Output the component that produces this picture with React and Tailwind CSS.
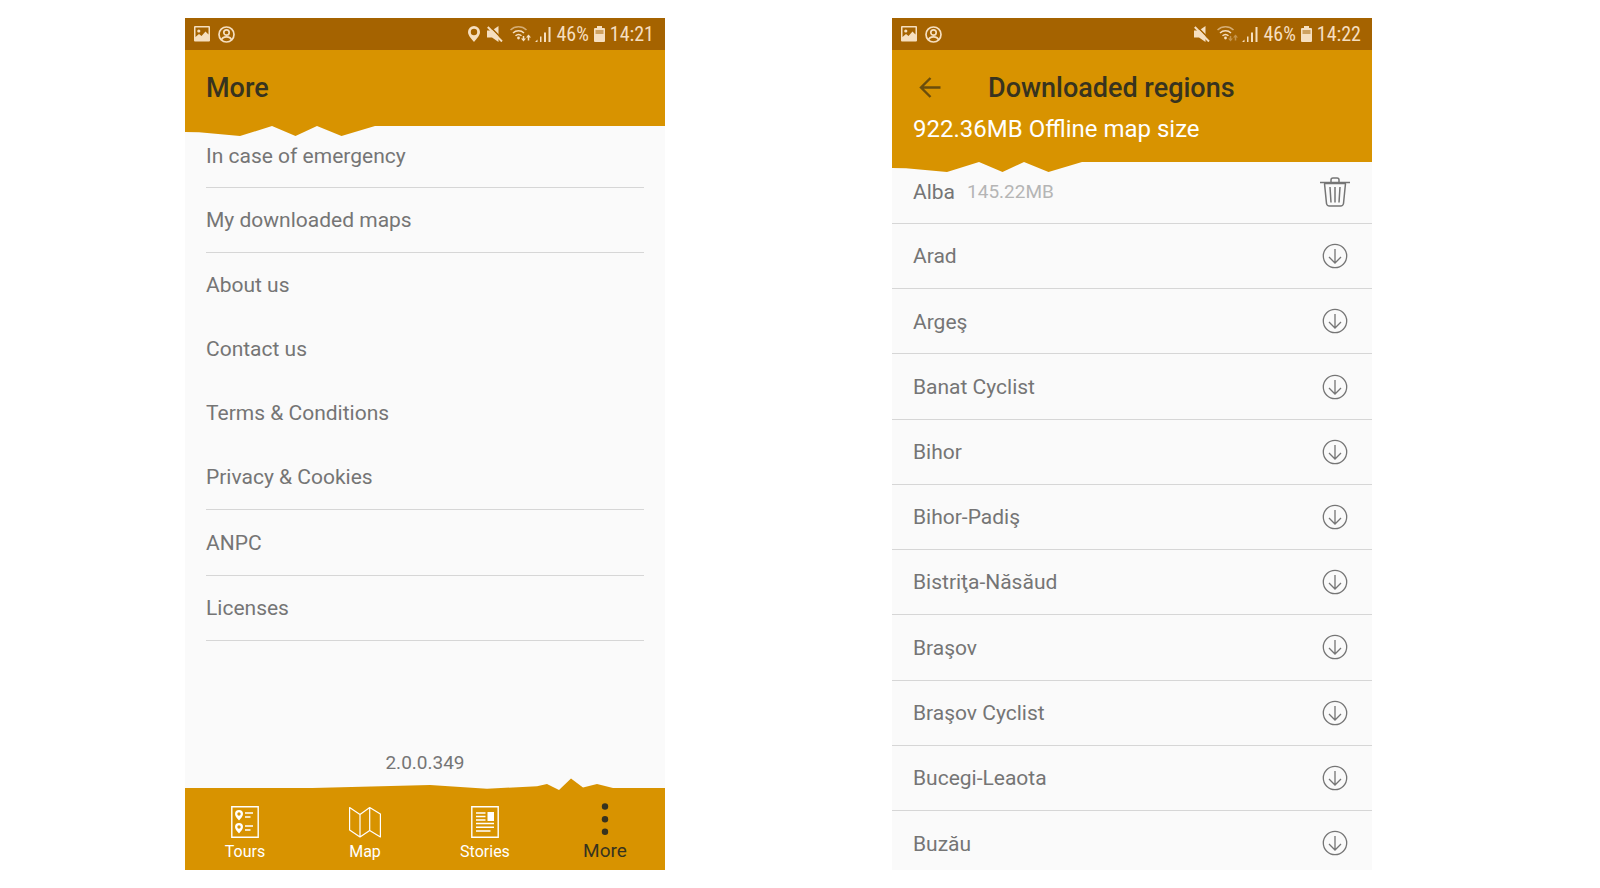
import React from 'react';

const menuItems = [
  { label: 'In case of emergency', size: 'h-[62px]', divider: true },
  { label: 'My downloaded maps', size: 'h-[65px] pt-0.5', divider: true },
  { label: 'About us', size: 'h-[64px] pt-0.5' },
  { label: 'Contact us', size: 'h-[64px] pt-0.5' },
  { label: 'Terms & Conditions', size: 'h-[64px] pt-0.5' },
  { label: 'Privacy & Cookies', size: 'h-[65px] pt-0.5', divider: true },
  { label: 'ANPC', size: 'h-[66px] pt-0.5', divider: true },
  { label: 'Licenses', size: 'h-[65px] pt-0.5', divider: true },
];

const regions = [
  'Arad',
  'Argeş',
  'Banat Cyclist',
  'Bihor',
  'Bihor-Padiş',
  'Bistriţa-Năsăud',
  'Braşov',
  'Braşov Cyclist',
  'Bucegi-Leaota',
];

function StatusBar({ time, location, dimWifi }) {
  return (
    <div className="h-8 shrink-0 bg-[#a56300] text-[#f6dfc0] flex items-center justify-between pl-[9px] pr-[11px]">
      <div className="flex items-center gap-2">
        {/* Picture */}
        <svg className="w-4 h-4" viewBox="0 0 16 16" fill="currentColor">
          <path fillRule="evenodd" d="M1 0h14a1 1 0 0 1 1 1v13.500a1 1 0 0 1-1 1H1a1 1 0 0 1-1-1V1a1 1 0 0 1 1-1zM1.500 1.500v9.500l3.500-3 2.500 2 4-4.500 3 3V1.500z" />
          <circle cx="4.800" cy="5" r="1.600" />
        </svg>
        {/* Contact */}
        <svg className="w-[17px] h-[17px]" viewBox="0 0 17 17" fill="none" stroke="currentColor" strokeWidth="1.700">
          <circle cx="8.500" cy="8.500" r="7.500" />
          <circle cx="8.500" cy="6.500" r="2.700" />
          <path d="M3.500 14c.5-2.500 2.500-3.200 5-3.200s4.500.7 5 3.200" />
        </svg>
      </div>

      <div className="flex items-center">
        {location && (
          <svg className="w-3 h-4 mr-[7px]" viewBox="0 0 12 16" fill="currentColor">
            <path fillRule="evenodd" d="M6 0a6 6 0 0 1 6 6c0 3.800-4.200 7.500-6 10C4.200 13.500 0 9.800 0 6a6 6 0 0 1 6-6zm0 2.800a3.200 3.200 0 1 0 0 6.400 3.200 3.200 0 0 0 0-6.400z" />
          </svg>
        )}
        {/* Muted */}
        <svg className="w-4 h-4 mr-[7px]" viewBox="0 0 16 16">
          <path d="M0 4.500h5L11.500 0v16L5 11.500H0z" fill="currentColor" />
          <path d="M2-.5l15 15.500" stroke="#a56300" strokeWidth="1.600" />
          <path d="M.8 1L15 15.500" stroke="currentColor" strokeWidth="2" />
        </svg>
        {/* Wi-Fi */}
        <svg className="w-[21px] h-4 mr-1" viewBox="0 0 21 16" fill="none" stroke="currentColor" strokeWidth="1.500">
          <path d="M.5 4a11.500 11.500 0 0 1 16 0" opacity="0.6" />
          <path d="M3 7a8 8 0 0 1 11 0M5.500 9.800a4.500 4.500 0 0 1 6 0" />
          <circle cx="8.500" cy="12" r="1.400" fill="currentColor" stroke="none" />
          <g opacity={dimWifi ? 0.4 : 1}>
            <path d="M13.500 10v4M18.500 14.500v-5" />
            <path d="M11 12.500h5l-2.500 3zM16 11.500h5l-2.500-3z" fill="currentColor" stroke="none" />
          </g>
        </svg>
        {/* Signal */}
        <svg className="w-4 h-4 mr-[5px]" viewBox="0 0 16 16" fill="currentColor">
          <path d="M0 16l2.500-2.500V16zM5 10.500h1.500V16H5zM9 6.500h2V16H9zM13.500 1h2v15h-2z" />
        </svg>
        <span className="font-['Roboto_Condensed',Roboto,sans-serif] text-[20px] leading-8">46%</span>
        {/* Battery */}
        <svg className="w-[11px] h-4 mx-[5px]" viewBox="0 0 11 16" fill="currentColor">
          <path d="M3 0h5v2h2a1 1 0 0 1 1 1v12a1 1 0 0 1-1 1H1a1 1 0 0 1-1-1V3a1 1 0 0 1 1-1h2z" />
          <path d="M1.500 4h8v4h-8z" fill="#a56300" opacity="0.5" />
        </svg>
        <span className="font-['Roboto_Condensed',Roboto,sans-serif] text-[20px] leading-8">{time}</span>
      </div>
    </div>
  );
}

function TornHeaderEdge() {
  return (
    <svg className="absolute left-0 top-full w-full h-[10px]" viewBox="0 0 480 10" preserveAspectRatio="none" fill="#d89300">
      <path d="M0 0V6L14 6.300 55 10 87 0l23.500 10L132 0l24.500 10L190 0z" />
    </svg>
  );
}

function DownloadIcon() {
  return (
    <svg className="w-8 h-8" viewBox="0 0 32 32" fill="none" stroke="currentColor" strokeWidth="1.300">
      <circle cx="16" cy="16" r="11.700" />
      <path d="M16 9v14M10 17l6 6 6-6" />
    </svg>
  );
}

function TrashIcon() {
  return (
    <svg className="w-8 h-8" viewBox="0 0 32 32" fill="none" stroke="currentColor" strokeWidth="1.500">
      <path d="M1 5.500h30M12 5V3a2 2 0 0 1 2-2h4a2 2 0 0 1 2 2v2" />
      <path d="M5 6.500h22M5.500 6.500L7.500 26.500a3 3 0 0 0 3 2.500h11a3 3 0 0 0 3-2.500l2-20" />
      <path d="M11 10l1 15.500M16 10v15.500M21 10l-1 15.500" />
    </svg>
  );
}

function ToursIcon() {
  return (
    <svg className="w-8 h-8" viewBox="0 0 32 32" fill="none" stroke="currentColor">
      <path d="M2.800.8h26.400v30.400H2.800z" strokeWidth="1.400" />
      <path fillRule="evenodd" stroke="none" fill="currentColor" d="M10 4a4 4 0 0 1 4 4c0 2.500-2.500 4.500-4 6.500C8.500 12.500 6 10.500 6 8a4 4 0 0 1 4-4zm0 2.300a1.700 1.700 0 1 0 0 3.400 1.700 1.700 0 0 0 0-3.400zM10 17a4 4 0 0 1 4 4c0 2.500-2.500 4.500-4 6.500C8.500 25.500 6 23.500 6 21a4 4 0 0 1 4-4zm0 2.300a1.700 1.700 0 1 0 0 3.400 1.700 1.700 0 0 0 0-3.400z" />
      <path d="M16 7h8M16 11h5.500M16 20h8M16 24h5.500" strokeWidth="1.300" />
    </svg>
  );
}

function MapIcon() {
  return (
    <svg className="w-8 h-8" viewBox="0 0 32 32" fill="none" stroke="currentColor" strokeWidth="1.200" strokeLinejoin="round">
      <path d="M.6 1.500L11 8.500l9.700-7L31.400 8v23L20.700 24.500l-9.700 6.500L.6 24zM11 8.500V31M20.700 1.500v23" />
    </svg>
  );
}

function StoriesIcon() {
  return (
    <svg className="w-8 h-8" viewBox="0 0 32 32" fill="none" stroke="currentColor">
      <path d="M2.800.8h26.400v30.400H2.800z" strokeWidth="1.400" />
      <path d="M7 7h9.500M7 10.500h9.500M7 14h9.500M7 17.500h18M7 21.200h18M7 25h14.500" strokeWidth="1.400" />
      <path d="M18.500 6h6.500v9h-6.500z" fill="currentColor" stroke="none" />
    </svg>
  );
}

function MoreIcon() {
  return (
    <svg className="w-8 h-8" viewBox="0 0 32 32" fill="currentColor">
      <circle cx="16" cy="3.500" r="3.200" />
      <circle cx="16" cy="16.200" r="3.200" />
      <circle cx="16" cy="28.800" r="3.200" />
    </svg>
  );
}

const tabs = [
  { label: 'Tours', Icon: ToursIcon },
  { label: 'Map', Icon: MapIcon },
  { label: 'Stories', Icon: StoriesIcon },
];

function MoreScreen() {
  return (
    <section className="flex-1 flex flex-col bg-[#fafafa] overflow-hidden">
      <StatusBar time="14:21" location />
      <header className="relative h-[76px] shrink-0 bg-[#d89300] px-[21px] flex items-center">
        <h1 className="text-[27px] leading-8 font-medium text-[#37331f]">More</h1>
        <TornHeaderEdge />
      </header>

      <ul className="px-[21px]">
        {menuItems.map(({ label, size, divider }) => (
          <li key={label} className={`${size} ${divider ? 'border-b border-[#d6d6d6]' : ''} flex`}>
            <a href="#" className="flex-1 flex items-center text-[21px]">{label}</a>
          </li>
        ))}
      </ul>

      <p className="mt-auto mb-[13px] text-center text-[19px] leading-6">2.0.0.349</p>

      {/* Bottom tabs */}
      <nav className="relative h-[82px] shrink-0 bg-[#d89300] text-white grid grid-cols-4">
        <svg className="absolute left-0 -top-[10px] w-full h-[14px]" viewBox="0 0 480 14" preserveAspectRatio="none">
          <path d="M0 0h480v14H0z" fill="#d89300" />
          <path d="M0 0H480V10H428L412 6 398 9.500 386 .5 374 12 362 6 352 8.300 302 10.700 245 7 127 10H0z" fill="#fafafa" />
        </svg>
        {tabs.map(({ label, Icon }) => (
          <a key={label} href="#" className="flex flex-col items-center pt-[18px]">
            <Icon />
            <span className="text-[16px] leading-7">{label}</span>
          </a>
        ))}
        <a href="#" className="flex flex-col items-center pt-[15px] text-[#37331f]">
          <MoreIcon />
          <span className="text-[19px] leading-8">More</span>
        </a>
      </nav>
    </section>
  );
}

function RegionsScreen() {
  return (
    <section className="flex-1 flex flex-col bg-[#fafafa] overflow-hidden">
      <StatusBar time="14:22" dimWifi />
      <header className="relative h-28 shrink-0 bg-[#d89300] px-[21px] pt-[22px]">
        <div className="flex items-center">
          <button type="button" aria-label="Back" className="w-[75px] pl-[6px] text-[#6a4d0c]">
            <svg className="w-[22px] h-[22px]" viewBox="0 0 22 22" fill="none" stroke="currentColor" strokeWidth="2.400">
              <path d="M21.500 10.500H2M11.500 1L2 10.500l9.500 9.500" />
            </svg>
          </button>
          <h1 className="text-[27px] leading-8 font-medium text-[#37331f]">Downloaded regions</h1>
        </div>
        <p className="mt-[9px] text-[24px] leading-8 text-white">922.36MB Offline map size</p>
        <TornHeaderEdge />
      </header>

      <ul className="flex-1 flex flex-col text-[21px]">
        <li className="h-[62px] shrink-0 border-b border-[#d6d6d6] px-[21px] flex items-center">
          <span>Alba</span>
          <span className="ml-3 text-[19px] text-[#b5b5b5]">145.22MB</span>
          <button type="button" aria-label="Delete Alba" className="ml-auto"><TrashIcon /></button>
        </li>
        {regions.map((name) => (
          <li key={name} className="flex-1 border-b border-[#d6d6d6] px-[21px] flex items-center justify-between">
            <span className="pt-0.5">{name}</span>
            <button type="button" aria-label={`Download ${name}`}><DownloadIcon /></button>
          </li>
        ))}
        {/* runs past the bottom of the screen */}
        <li className="h-[65px] -mb-[6px] shrink-0 px-[21px] flex items-center justify-between">
          <span className="pt-0.5">Buzău</span>
          <button type="button" aria-label="Download Buzău"><DownloadIcon /></button>
        </li>
      </ul>
    </section>
  );
}

export default function App() {
  return (
    <main className="h-screen min-h-[800px] bg-white font-[Roboto,sans-serif] text-[#757575] flex gap-[227px] pl-[185px] pr-[228px] py-[18px]">
      <MoreScreen />
      <RegionsScreen />
    </main>
  );
}
